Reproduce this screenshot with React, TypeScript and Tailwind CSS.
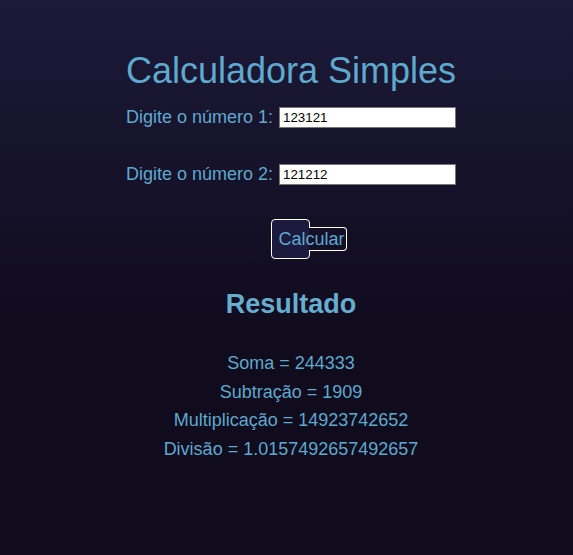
export default function App() {
  const n1 = 123121;
  const n2 = 121212;

  return (
    <div className="min-h-[555px] w-full bg-gradient-to-b from-[#1c1a39] to-[#100b1d] to-60% pl-[9px] pt-[50px] text-[#5ea9cd] font-['Liberation_Sans',Arial,sans-serif]">
      <div className="flex flex-col items-center">
        <h1 className="text-[36px] leading-[42px]">Calculadora Simples</h1>

        {/* Inputs */}
        <div className="mt-[15px] flex items-center gap-[6px]">
          <label className="text-[18px] leading-[21px]">Digite o número 1:</label>
          <input
            type="text"
            defaultValue={n1}
            className="w-[177px] h-[21px] border border-[#767676] bg-white px-[3px] text-[13.33px] text-black outline-none"
          />
        </div>
        <div className="mt-[36px] flex items-center gap-[6px]">
          <label className="text-[18px] leading-[21px]">Digite o número 2:</label>
          <input
            type="text"
            defaultValue={n2}
            className="w-[177px] h-[21px] border border-[#767676] bg-white px-[3px] text-[13.33px] text-black outline-none"
          />
        </div>

        {/* Button */}
        <button className="relative mt-[34px] mr-[2px] flex h-[40px] w-[39px] items-center rounded-[4px] border border-white bg-[#1c1b3d] pl-[7px]">
          <span className="relative z-10 whitespace-nowrap text-[18px] leading-[21px] text-[#5ea9cd]">Calcular</span>
          <span className="absolute left-[37px] top-[7px] h-[24px] w-[38px] rounded-r-[4px] border border-l-0 border-white bg-[#130f27]" />
        </button>

        {/* Result */}
        <h2 className="mt-[30px] text-[27px] font-bold leading-[31px] text-[#66adcf]">Resultado</h2>
        <div className="mt-[29px] flex flex-col items-center text-[18px] leading-[28.5px]">
          <p>Soma = {n1 + n2}</p>
          <p>Subtração = {n1 - n2}</p>
          <p>Multiplicação = {n1 * n2}</p>
          <p>Divisão = {n1 / n2}</p>
        </div>
      </div>
    </div>
  );
}
